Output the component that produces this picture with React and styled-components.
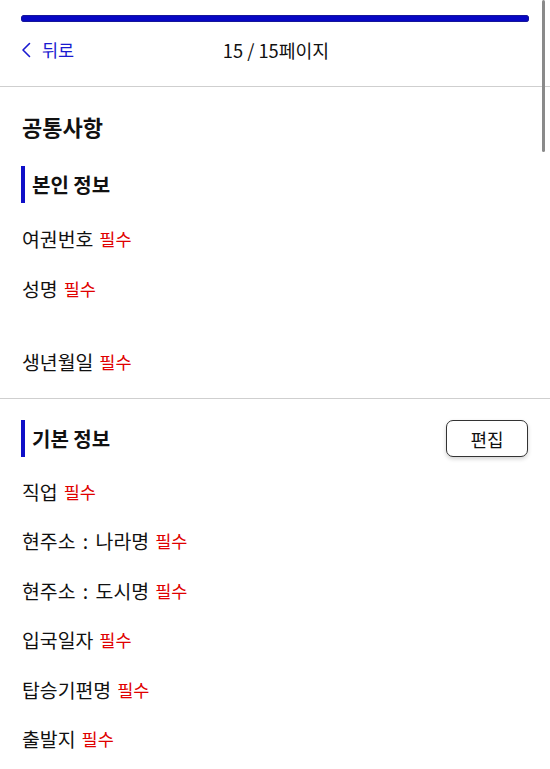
import React from "react";
import styled, { createGlobalStyle } from "styled-components";

const GlobalStyle = createGlobalStyle`
  html, body {
    margin: 0;
    padding: 0;
    background: #ffffff;
    overflow: hidden;
  }
  body {
    font-family: "Noto Sans CJK KR", "Noto Sans", sans-serif;
    color: #111111;
  }
`;

const Page = styled.div`
  width: 550px;
  height: 769px;
  overflow: hidden;
`;

const Top = styled.div`
  padding: 15px 21px 0 21px;
`;

const Progress = styled.div`
  height: 7px;
  border-radius: 4px;
  background: #0707c4;
  box-shadow: inset 0 0 0 1px #16169a;
`;

const Nav = styled.div`
  display: grid;
  grid-template-columns: 1fr auto 1fr;
  align-items: center;
  height: 56px;
  margin-bottom: 8px;
`;

const Back = styled.button`
  justify-self: start;
  display: flex;
  align-items: center;
  gap: 11px;
  padding: 0;
  border: none;
  background: none;
  color: #1a1ad0;
  font-family: inherit;
  font-size: 17.5px;
  line-height: 24px;
  cursor: pointer;
`;

const PageTitle = styled.div`
  font-size: 18.3px;
  line-height: 24px;
  color: #111;
  margin-left: 2px;
`;

const Divider = styled.hr`
  margin: 0;
  border: none;
  height: 1px;
  background: #cfcfcf;
`;

const Section = styled.section`
  padding: ${(p) => p.$top}px 22px ${(p) => p.$bottom}px 22px;
`;

const MainTitle = styled.h1`
  margin: 0 0 25px 0;
  font-size: 22px;
  line-height: 30px;
  font-weight: 700;
`;

const SubHead = styled.div`
  display: flex;
  align-items: center;
  justify-content: space-between;
  height: 37px;
  margin-left: -1px;
  margin-bottom: ${(p) => p.$gap}px;
`;

const SubTitle = styled.h2`
  margin: 0;
  display: flex;
  align-items: center;
  height: 37px;
  padding-left: 7px;
  border-left: 4px solid #0f0fc8;
  font-size: 20px;
  line-height: 26px;
  font-weight: 700;
`;

const EditButton = styled.button`
  width: 82px;
  height: 37px;
  border: 1px solid #333;
  border-radius: 7px;
  background: #fff;
  box-shadow: 0 2px 4px rgba(0, 0, 0, 0.18);
  font-family: inherit;
  font-size: 18px;
  color: #111;
  cursor: pointer;
`;

const Field = styled.div`
  display: flex;
  align-items: center;
  height: ${(p) => p.$h}px;
  margin-top: ${(p) => p.$offset || 0}px;
  font-size: 19.4px;
  line-height: 26px;
  word-spacing: 3px;
  white-space: pre;
`;

const Required = styled.span`
  margin-left: 6px;
  color: #e00000;
  font-size: 17.5px;
  word-spacing: normal;
`;

const ScrollThumb = styled.div`
  position: fixed;
  top: 0;
  right: 5px;
  width: 3px;
  height: 152px;
  border-radius: 2px;
  background: #8a8a8a;
`;

const Chevron = () => (
  <svg width="10" height="16" viewBox="0 0 10 16" fill="none">
    <path d="M8.5 1.5 L2 8 L8.5 14.5" stroke="#1a1ad0" strokeWidth="1.6" strokeLinecap="round" strokeLinejoin="round" />
  </svg>
);

const personal = [
  { label: "여권번호" },
  { label: "성명" },
  { label: "생년월일", offset: 23 },
];

const basic = ["직업", "현주소 : 나라명", "현주소 : 도시명", "입국일자", "탑승기편명", "출발지"];

export default function App() {
  return (
    <Page>
      <GlobalStyle />
      <Top>
        <Progress />
        <Nav>
          <Back>
            <Chevron />
            뒤로
          </Back>
          <PageTitle>15 / 15페이지</PageTitle>
          <span />
        </Nav>
      </Top>
      <Divider />

      <Section $top={24} $bottom={11}>
        <MainTitle>공통사항</MainTitle>
        <SubHead $gap={11}>
          <SubTitle>본인 정보</SubTitle>
        </SubHead>
        {personal.map((f) => (
          <Field key={f.label} $h={50} $offset={f.offset}>
            {f.label}
            <Required>필수</Required>
          </Field>
        ))}
      </Section>
      <Divider />

      <Section $top={21} $bottom={0}>
        <SubHead $gap={10}>
          <SubTitle>기본 정보</SubTitle>
          <EditButton>편집</EditButton>
        </SubHead>
        {basic.map((label) => (
          <Field key={label} $h={49.5}>
            {label}
            <Required>필수</Required>
          </Field>
        ))}
      </Section>
      <ScrollThumb />
    </Page>
  );
}
